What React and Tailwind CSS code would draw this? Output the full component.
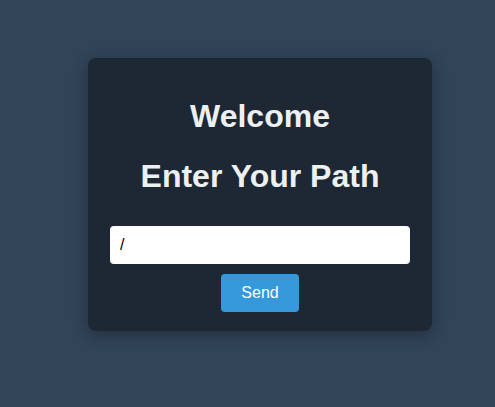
export default function App() {
  return (
    <div
      className="min-h-screen w-full bg-[#314458] pt-[58px] pl-[88px]"
      style={{ fontFamily: '"Liberation Sans", Arial, sans-serif' }}
    >
      <div className="w-[344px] rounded-lg bg-[#1e2835] px-[22px] pt-[40px] pb-[19px] shadow-[0_4px_16px_rgba(0,0,0,0.3)] flex flex-col items-center">
        <h1 className="text-[32px] leading-[37px] font-bold text-[#ecf0f1]">Welcome</h1>
        <h1 className="mt-[23px] text-[32px] leading-[37px] font-bold text-[#ecf0f1]">Enter Your Path</h1>
        <input
          type="text"
          defaultValue="/"
          className="mt-[31px] h-[38px] w-[300px] rounded bg-white px-[10px] text-[16px] text-black outline-none"
        />
        <button className="mt-[10px] h-[38px] w-[78px] rounded bg-[#3498db] text-[16px] text-white">
          Send
        </button>
      </div>
    </div>
  );
}
